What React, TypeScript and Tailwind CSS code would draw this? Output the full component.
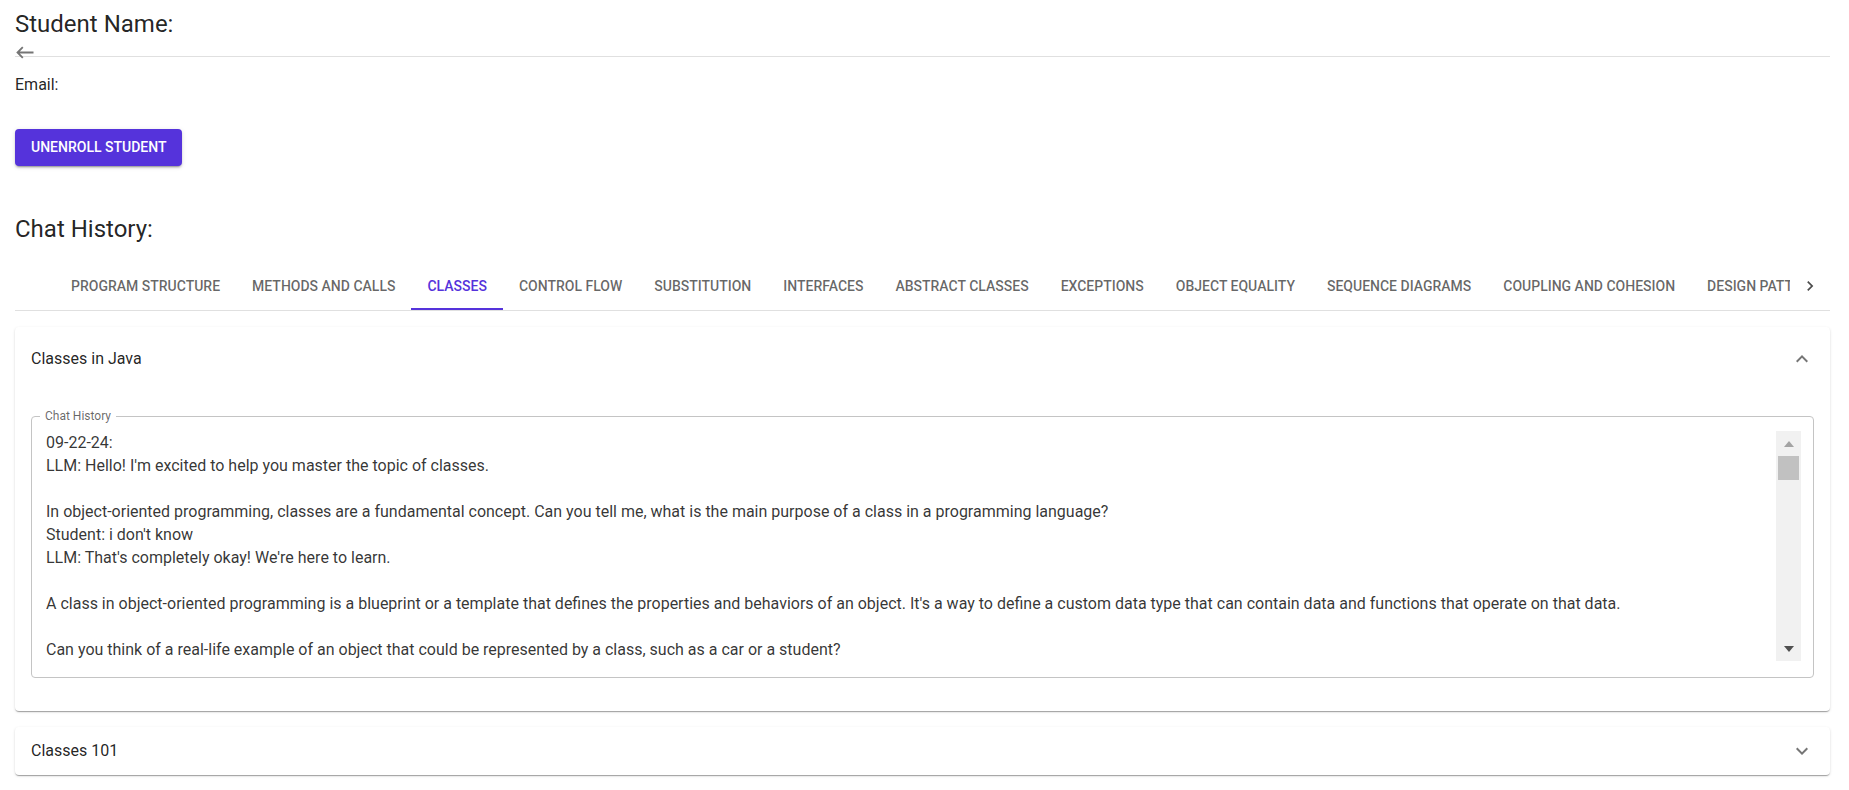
import React, { useState } from 'react';

const TOPICS = [
  'PROGRAM STRUCTURE',
  'METHODS AND CALLS',
  'CLASSES',
  'CONTROL FLOW',
  'SUBSTITUTION',
  'INTERFACES',
  'ABSTRACT CLASSES',
  'EXCEPTIONS',
  'OBJECT EQUALITY',
  'SEQUENCE DIAGRAMS',
  'COUPLING AND COHESION',
  'DESIGN PATTERNS',
];

const CHAT_TEXT = [
  '09-22-24:',
  "LLM: Hello! I'm excited to help you master the topic of classes.",
  '',
  'In object-oriented programming, classes are a fundamental concept. Can you tell me, what is the main purpose of a class in a programming language?',
  "Student: i don't know",
  "LLM: That's completely okay! We're here to learn.",
  '',
  "A class in object-oriented programming is a blueprint or a template that defines the properties and behaviors of an object. It's a way to define a custom data type that can contain data and functions that operate on that data.",
  '',
  'Can you think of a real-life example of an object that could be represented by a class, such as a car or a student?',
  'Student: a car',
  "LLM: Great example! A car can be represented by a class.",
].join('\n');

function Chevron({ up = false }: { up?: boolean }) {
  return (
    <svg width="24" height="24" viewBox="0 0 24 24" className={up ? 'rotate-180' : ''}>
      <path d="M16.59 8.59 12 13.17 7.41 8.59 6 10l6 6 6-6z" fill="rgba(0,0,0,0.54)" />
    </svg>
  );
}

function FakeScrollbar() {
  return (
    <div className="absolute top-[14px] right-[12px] w-[25px] h-[230px] bg-[#f1f1f1] flex flex-col items-center">
      <div className="h-[25px] w-full flex items-center justify-center">
        <svg width="10" height="6" viewBox="0 0 10 6">
          <polygon points="0,6 5,0 10,6" fill="#a3a3a3" />
        </svg>
      </div>
      <div className="w-[21px] h-[24px] bg-[#c1c1c1]" />
      <div className="flex-1" />
      <div className="h-[25px] w-full flex items-center justify-center">
        <svg width="10" height="6" viewBox="0 0 10 6">
          <polygon points="0,0 10,0 5,6" fill="#505050" />
        </svg>
      </div>
    </div>
  );
}

export default function App() {
  const [activeTab, setActiveTab] = useState(2);
  const [openPanel, setOpenPanel] = useState<string | null>('java');

  const paper = 'bg-white rounded-[4px] shadow-[0px_2px_1px_-1px_rgba(0,0,0,0.2),0px_1px_1px_0px_rgba(0,0,0,0.14),0px_1px_3px_0px_rgba(0,0,0,0.12)]';

  return (
    <div className="min-h-screen bg-white pl-[15px] pr-[19px] font-['Roboto','Helvetica','Arial',sans-serif] text-[rgba(0,0,0,0.87)]">
      <h1 className="pt-[8px] text-[24px] leading-[32px] font-normal">Student Name:</h1>
      <svg width="19" height="13" viewBox="0 0 19 13" className="block mt-[6px] -mb-[3px]">
        <path d="M18.5 6.5H2.5M7.8 1.2L2.5 6.5l5.3 5.3" fill="none" stroke="#757575" strokeWidth="1.8" />
      </svg>
      <hr className="border-0 border-t border-[#e0e0e0]" />
      <p className="mt-[16px] text-[16px] leading-[24px]">Email:</p>

      <button className="mt-[32px] h-[37px] px-[16px] rounded-[4px] bg-[#5533db] text-white text-[14px] font-medium uppercase shadow-[0px_3px_1px_-2px_rgba(0,0,0,0.2),0px_2px_2px_0px_rgba(0,0,0,0.14),0px_1px_5px_0px_rgba(0,0,0,0.12)]">
        Unenroll Student
      </button>

      <h2 className="mt-[47px] text-[24px] leading-[32px] font-normal">Chat History:</h2>

      <div className="mt-[17px] flex border-b border-[#e0e0e0]">
        <div className="w-[40px] shrink-0" />
        <div className="flex-1 flex overflow-hidden">
          {TOPICS.map((t, i) => (
            <button
              key={t}
              onClick={() => setActiveTab(i)}
              className={`relative shrink-0 h-[48px] min-w-[90px] px-[16px] flex items-center justify-center whitespace-nowrap text-[14px] leading-[24px] font-medium ${i === activeTab ? 'text-[#5533db]' : 'text-[rgba(0,0,0,0.6)]'}`}
            >
              {t}
              {i === activeTab && <span className="absolute left-0 right-0 bottom-0 h-[2px] bg-[#5533db]" />}
            </button>
          ))}
        </div>
        <div className="w-[40px] shrink-0 flex items-center justify-center">
          <svg width="20" height="20" viewBox="0 0 24 24">
            <path d="M8.59 16.59 13.17 12 8.59 7.41 10 6l6 6-6 6z" fill="rgba(0,0,0,0.7)" />
          </svg>
        </div>
      </div>

      <div className={`mt-[16px] ${paper}`}>
        <button
          onClick={() => setOpenPanel(openPanel === 'java' ? null : 'java')}
          className="w-full h-[64px] px-[16px] flex items-center justify-between text-[16px] leading-[24px]"
        >
          <span>Classes in Java</span>
          <Chevron up={openPanel === 'java'} />
        </button>
        {openPanel === 'java' && (
          <div className="px-[16px] pt-[25px] pb-[33px]">
            <div className="relative border border-[#c4c4c4] rounded-[4px] px-[14px] pt-[14px] pb-[16px]">
              <span className="absolute left-[8px] top-[-9px] px-[5px] bg-white text-[12px] leading-[16px] text-[rgba(0,0,0,0.6)]">
                Chat History
              </span>
              <textarea
                readOnly
                rows={10}
                value={CHAT_TEXT}
                className="block w-full h-[230px] resize-none overflow-hidden outline-none bg-transparent pr-[40px] text-[16px] leading-[23px] text-[rgba(0,0,0,0.8)] font-['Roboto','Helvetica','Arial',sans-serif]"
              />
              <FakeScrollbar />
            </div>
          </div>
        )}
      </div>

      <div className={`mt-[16px] ${paper}`}>
        <button
          onClick={() => setOpenPanel(openPanel === '101' ? null : '101')}
          className="w-full h-[48px] px-[16px] flex items-center justify-between text-[16px] leading-[24px]"
        >
          <span>Classes 101</span>
          <Chevron up={openPanel === '101'} />
        </button>
      </div>
    </div>
  );
}
